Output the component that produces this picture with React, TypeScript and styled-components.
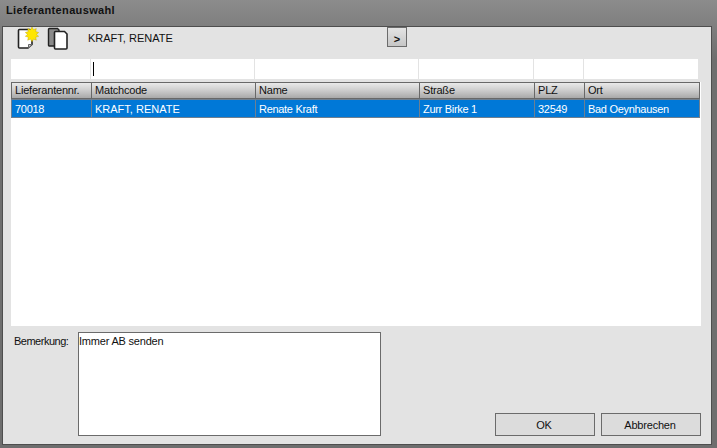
import React from 'react';
import { createGlobalStyle, default as styled } from 'styled-components';

const GlobalStyle = createGlobalStyle`
  html, body {
    margin: 0;
    padding: 0;
    background: #6f6f6f;
  }
  * {
    box-sizing: border-box;
  }
`;

const uiFont = `"Liberation Sans", Arial, sans-serif`;

const Window = styled.div`
  width: 717px;
  height: 448px;
  overflow: hidden;
  display: flex;
  flex-direction: column;
  padding: 0 5px 3px 2px;
  background: linear-gradient(#8c8c8c, #6e6e6e 60px, #6e6e6e);
  font-family: ${uiFont};
  font-size: 11px;
  letter-spacing: -0.3px;
  color: #101010;
`;

const TitleBar = styled.div`
  height: 26px;
  flex-shrink: 0;
  padding: 3px 0 0 4px;
  font-size: 11px;
  font-weight: bold;
  letter-spacing: 0.35px;
  color: #111;
  line-height: 14px;
`;

const Content = styled.div`
  flex: 1;
  display: flex;
  flex-direction: column;
  min-height: 0;
  border: 1px solid #4e4e4e;
  background: #e3e3e3;
  padding: 0 10px 8px 8px;
`;

const Toolbar = styled.div`
  height: 32px;
  flex-shrink: 0;
  display: flex;
  align-items: flex-start;
`;

const IconSlot = styled.div`
  width: 32px;
  height: 24px;
  padding-left: 4px;
  flex-shrink: 0;
`;

const Supplier = styled.span`
  margin: 4px 0 0 13px;
  width: 299px;
  line-height: 14px;
  letter-spacing: 0;
`;

const NextButton = styled.button`
  width: 20px;
  height: 20px;
  padding: 3px 0 0;
  border: 1px solid #6b6b6b;
  background: linear-gradient(#e4e4e4, #c6c6c6);
  font-family: ${uiFont};
  font-size: 11px;
  font-weight: bold;
  color: #111;
`;

const FilterRow = styled.div`
  height: 20px;
  width: 687px;
  flex-shrink: 0;
  display: grid;
  grid-template-columns: 80px 164px 164px 115px 50px 114px;
  background: #fff;
`;

const FilterCell = styled.div`
  border-right: 1px solid #e3e3e3;
  display: flex;
  align-items: center;
  &:last-child {
    border-right: 0;
  }
`;

const Caret = styled.span`
  width: 1px;
  height: 14px;
  margin-left: 2px;
  background: #000;
`;

const Grid = styled.div`
  flex: 1;
  min-height: 0;
  margin-top: 3px;
  background: #fff;
`;

const Row = styled.div`
  display: grid;
  grid-template-columns: 81px 164px 164px 115px 50px 115px;
  width: 689px;
`;

const HeaderCell = styled.div`
  height: 17px;
  padding-left: 3px;
  line-height: 15px;
  border: 1px solid #686868;
  border-left-width: 0;
  background: linear-gradient(#e9e9e9, #cfcfcf 45%, #a9a9a9);
  letter-spacing: -0.2px;
  white-space: nowrap;
  overflow: hidden;
  &:first-child {
    border-left-width: 1px;
  }
`;

const DataCell = styled.div<{ $caps?: boolean }>`
  height: 19px;
  padding: 1px 0 0 3px;
  line-height: 17px;
  color: #fff;
  background: #0078d7;
  border: 1px solid #6e7f90;
  border-left-width: 0;
  letter-spacing: ${(p) => (p.$caps ? '0' : '-0.3px')};
  white-space: nowrap;
  overflow: hidden;
  &:first-child {
    border-left-width: 1px;
  }
`;

const Footer = styled.div`
  height: 110px;
  flex-shrink: 0;
  display: flex;
  align-items: flex-end;
`;

const RemarkLabel = styled.span`
  align-self: flex-start;
  width: 67px;
  padding: 9px 0 0 3px;
  line-height: 13px;
  letter-spacing: -0.5px;
`;

const RemarkBox = styled.div`
  width: 303px;
  height: 104px;
  border: 1px solid #6b6b6b;
  background: #fff;
  padding: 2px 0 0;
  line-height: 13px;
  letter-spacing: -0.2px;
`;

const Buttons = styled.div`
  margin-left: auto;
  display: flex;
  gap: 6px;
`;

const DialogButton = styled.button`
  width: 100px;
  height: 23px;
  padding: 0 2px 0 0;
  border: 1px solid #6b6b6b;
  background: #dcdcdc;
  font-family: ${uiFont};
  font-size: 11px;
  letter-spacing: -0.2px;
  color: #111;
`;

const NewDocumentIcon = () => (
  <svg width="24" height="24" viewBox="0 0 24 24" overflow="visible">
    <path
      d="M4.500 2.500h10l2.500 2.500v12.500l-4 3.500h-8.500a1 1 0 0 1-1-1v-16.500a1 1 0 0 1 1-1z"
      fill="#fff"
      stroke="#222"
      strokeWidth="1.6"
    />
    <path d="M17 17.500l-3.500 3.500v-3.500z" fill="#d0d0d0" stroke="#666" strokeWidth="1" />
    <path
      d="M17 0l1.500 2.700 2.800-1.100-.6 3 3 .9-2.300 1.900 2.300 1.900-3 .9.6 3-2.800-1.100-1.500 2.700-1.500-2.700-2.800 1.100.6-3-3-.9 2.300-1.900-2.300-1.900 3-.9-.6-3 2.800 1.100z"
      fill="#ffe600"
      stroke="#b8a000"
      strokeWidth="0.4"
    />
  </svg>
);

const CopyDocumentIcon = () => (
  <svg width="24" height="24" viewBox="0 0 24 24">
    <path d="M2.500 1.500h8l1.500 1.500v16h-9.500a1 1 0 0 1-1-1v-15.500a1 1 0 0 1 1-1z" fill="#8a8a8a" stroke="#222" strokeWidth="1.400" />
    <path d="M8.500 4.500h9l2.500 2.500v14a1 1 0 0 1-1 1h-10.500a1 1 0 0 1-1-1v-15.500a1 1 0 0 1 1-1z" fill="#fff" stroke="#222" strokeWidth="1.600" />
  </svg>
);

const headers = ['Lieferantennr.', 'Matchcode', 'Name', 'Straße', 'PLZ', 'Ort'];
const cells = ['70018', 'KRAFT, RENATE', 'Renate Kraft', 'Zurr Birke 1', '32549', 'Bad Oeynhausen'];

export default function App() {
  return (
    <Window>
      <GlobalStyle />
      <TitleBar>Lieferantenauswahl</TitleBar>
      <Content>
        <Toolbar>
          <IconSlot>
            <NewDocumentIcon />
          </IconSlot>
          <IconSlot>
            <CopyDocumentIcon />
          </IconSlot>
          <Supplier>KRAFT, RENATE</Supplier>
          <NextButton>&gt;</NextButton>
        </Toolbar>
        <FilterRow>
          {headers.map((header, i) => (
            <FilterCell key={header}>{i === 1 && <Caret />}</FilterCell>
          ))}
        </FilterRow>
        <Grid>
          <Row>
            {headers.map((header) => (
              <HeaderCell key={header}>{header}</HeaderCell>
            ))}
          </Row>
          <Row>
            {cells.map((cell, i) => (
              <DataCell key={cell} $caps={i === 1}>
                {cell}
              </DataCell>
            ))}
          </Row>
        </Grid>
        <Footer>
          <RemarkLabel>Bemerkung:</RemarkLabel>
          <RemarkBox>Immer AB senden</RemarkBox>
          <Buttons>
            <DialogButton>OK</DialogButton>
            <DialogButton>Abbrechen</DialogButton>
          </Buttons>
        </Footer>
      </Content>
    </Window>
  );
}
